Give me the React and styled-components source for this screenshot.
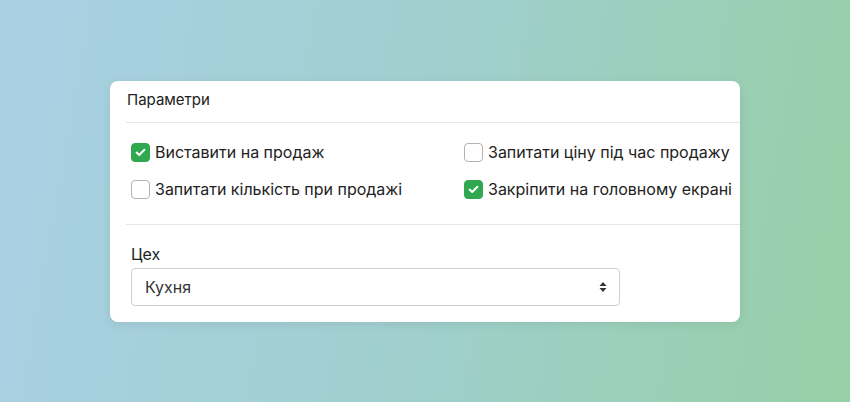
import React, { useState } from 'react';
import styled, { createGlobalStyle } from 'styled-components';

const GlobalStyle = createGlobalStyle`
  html, body {
    margin: 0;
    padding: 0;
  }
  body {
    font-family: Inter, "Liberation Sans", Arial, sans-serif;
    color: #222;
  }
`;

const Page = styled.div`
  height: 100vh;
  display: flex;
  align-items: center;
  justify-content: center;
  background: linear-gradient(100deg, #a9d0e5 0%, #a0cfce 50%, #97cfa6 100%);
`;

const Card = styled.div`
  width: 630px;
  background: #fff;
  border-radius: 8px;
  box-shadow: 0 2px 10px rgba(0, 0, 0, 0.08);
  overflow: hidden;
`;

const Section = styled.div`
  margin-left: 16px;
  border-bottom: ${({ $last }) => ($last ? 'none' : '1px solid #e6e6e6')};
`;

const Title = styled.div`
  height: 41px;
  display: flex;
  align-items: center;
  padding-left: 1px;
  padding-bottom: 3px;
  box-sizing: border-box;
  font-size: 15px;
  color: #222;
`;

const OptionsGrid = styled.div`
  display: grid;
  grid-template-columns: 333px 1fr;
  row-gap: 18px;
  padding: 20px 0 25px 5px;
`;

const Option = styled.label`
  display: flex;
  align-items: center;
  gap: 5px;
  height: 19px;
  font-size: 16px;
  color: #222;
  cursor: pointer;
  user-select: none;
`;

const Box = styled.span`
  width: 19px;
  height: 19px;
  box-sizing: border-box;
  border-radius: 4px;
  border: 1px solid ${({ $on }) => ($on ? '#2fa84f' : '#b3b3b3')};
  background: ${({ $on }) => ($on ? '#2fa84f' : '#fff')};
  display: flex;
  align-items: center;
  justify-content: center;
  flex-shrink: 0;
`;

const FieldArea = styled.div`
  padding: 20px 0 16px 5px;
`;

const FieldLabel = styled.div`
  font-size: 16px;
  line-height: 19px;
  color: #222;
  margin-bottom: 4px;
`;

const SelectBox = styled.div`
  width: 489px;
  height: 38px;
  box-sizing: border-box;
  border: 1px solid #cfcfcf;
  border-radius: 4px;
  display: flex;
  align-items: center;
  justify-content: space-between;
  padding: 0 12px 0 13px;
  font-size: 16px;
  color: #333;
`;

const Check = () => (
  <svg width="11" height="9" viewBox="0 0 11 9">
    <path d="M1.6 4.6 L4.2 7 L9.4 1.8" fill="none" stroke="#fff" strokeWidth="2" strokeLinecap="round" strokeLinejoin="round" />
  </svg>
);

const Arrows = () => (
  <svg width="8" height="12" viewBox="0 0 8 12">
    <path d="M4 1 L7.5 5 H0.5 Z" fill="#333" />
    <path d="M4 11 L7.5 7 H0.5 Z" fill="#333" />
  </svg>
);

const Checkbox = ({ checked, onToggle, children }) => (
  <Option onClick={onToggle}>
    <Box $on={checked}>{checked && <Check />}</Box>
    {children}
  </Option>
);

export default function App() {
  const [opts, setOpts] = useState({
    sale: true,
    askPrice: false,
    askQty: false,
    pin: true,
  });
  const toggle = (k) => () => setOpts((o) => ({ ...o, [k]: !o[k] }));

  return (
    <>
      <GlobalStyle />
      <Page>
        <Card>
          <Section>
            <Title>Параметри</Title>
          </Section>
          <Section>
            <OptionsGrid>
              <Checkbox checked={opts.sale} onToggle={toggle('sale')}>Виставити на продаж</Checkbox>
              <Checkbox checked={opts.askPrice} onToggle={toggle('askPrice')}>Запитати ціну під час продажу</Checkbox>
              <Checkbox checked={opts.askQty} onToggle={toggle('askQty')}>Запитати кількість при продажі</Checkbox>
              <Checkbox checked={opts.pin} onToggle={toggle('pin')}>Закріпити на головному екрані</Checkbox>
            </OptionsGrid>
          </Section>
          <Section $last>
            <FieldArea>
              <FieldLabel>Цех</FieldLabel>
              <SelectBox>
                <span>Кухня</span>
                <Arrows />
              </SelectBox>
            </FieldArea>
          </Section>
        </Card>
      </Page>
    </>
  );
}
